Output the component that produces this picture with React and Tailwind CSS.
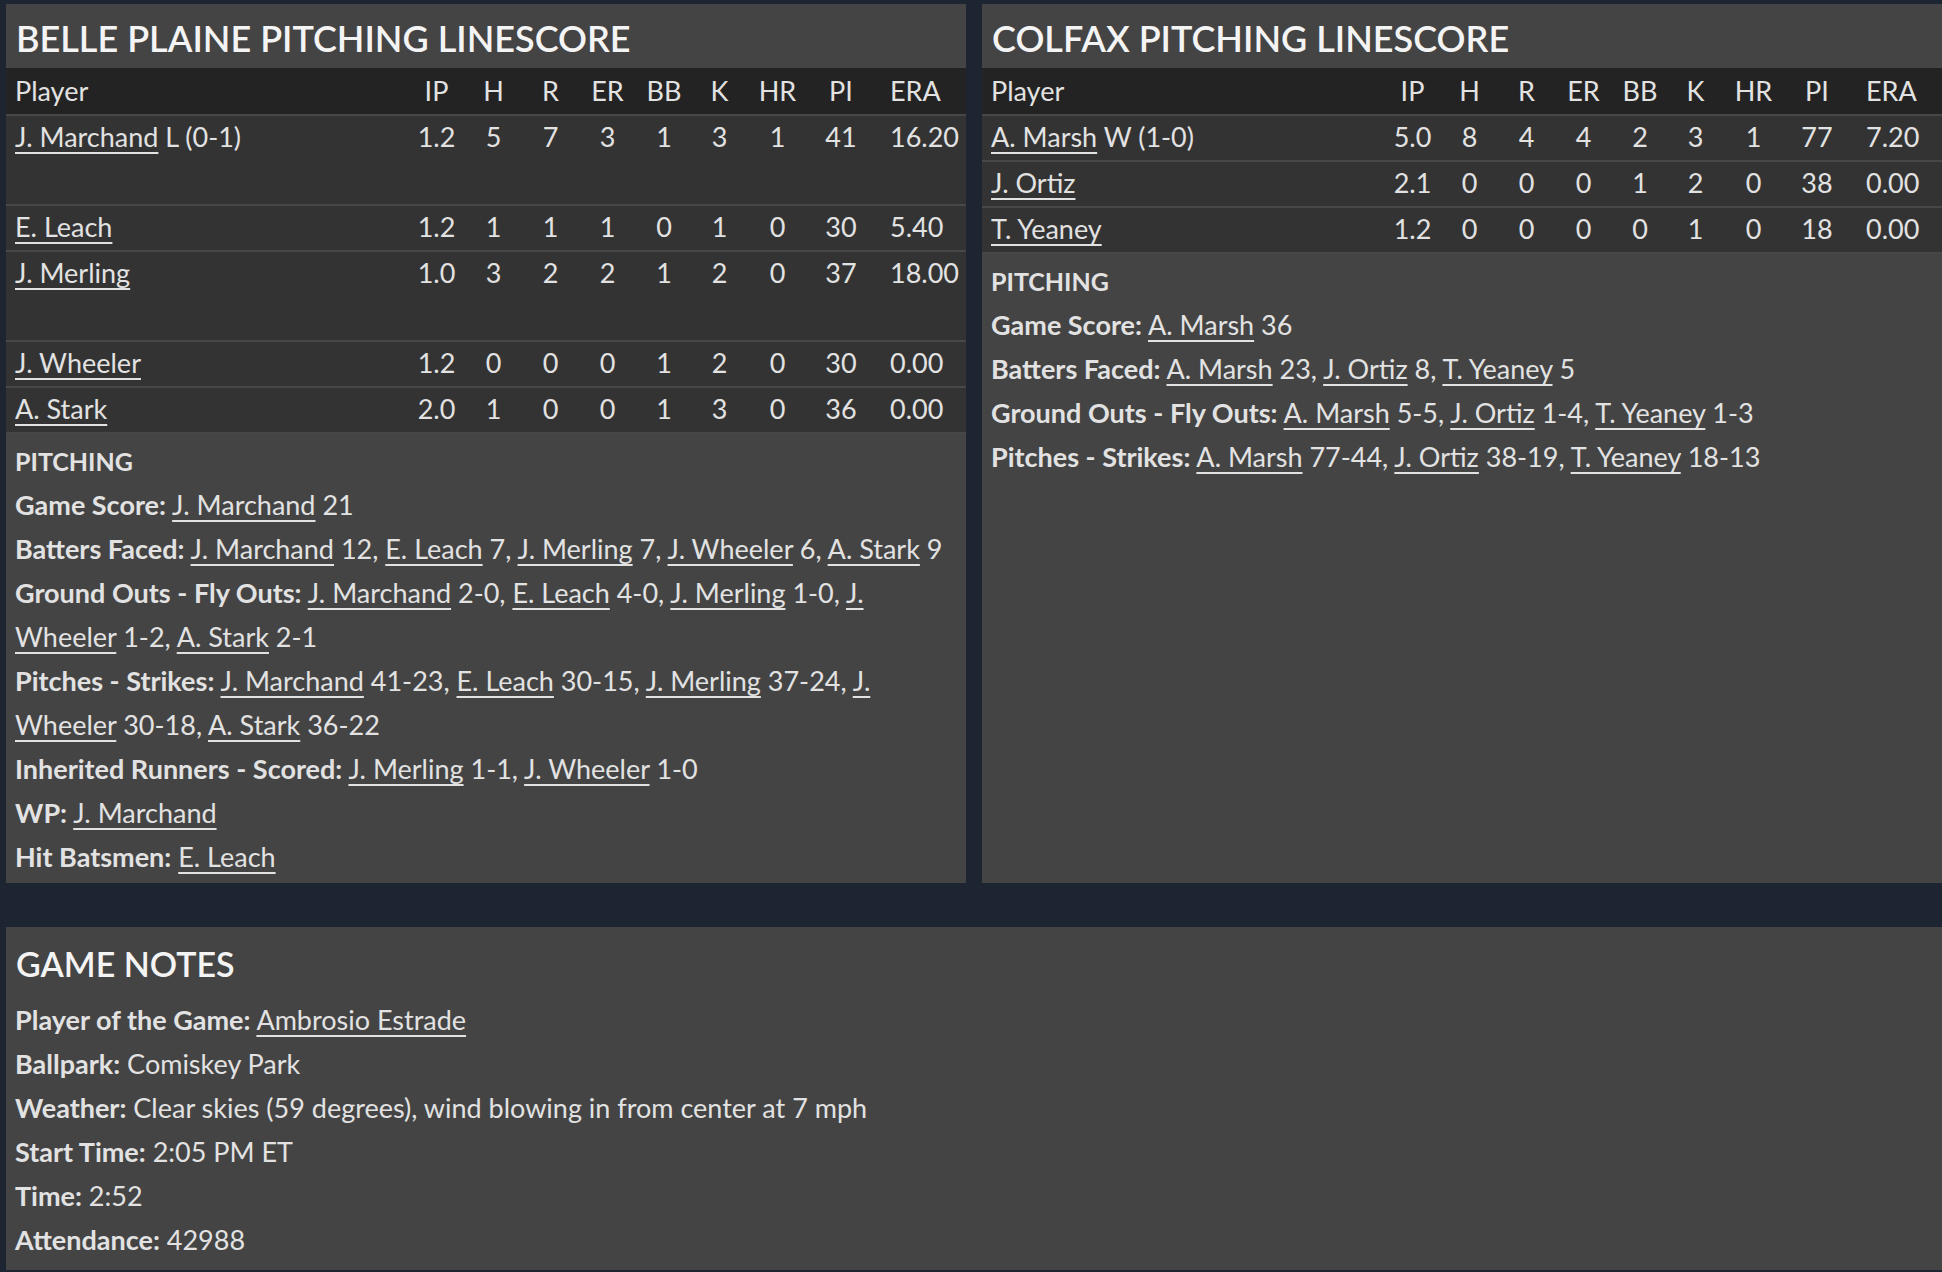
import React from 'react';

const cols = ['IP', 'H', 'R', 'ER', 'BB', 'K', 'HR', 'PI', 'ERA'];

// names that wrap at the panel edge are split in two links, as in the game's page
const teams = [
  {
    title: 'BELLE PLAINE PITCHING LINESCORE',
    rows: [
      { name: 'J. Marchand', note: 'L (0-1)', stats: ['1.2', '5', '7', '3', '1', '3', '1', '41', '16.20'], tall: true },
      { name: 'E. Leach', stats: ['1.2', '1', '1', '1', '0', '1', '0', '30', '5.40'] },
      { name: 'J. Merling', stats: ['1.0', '3', '2', '2', '1', '2', '0', '37', '18.00'], tall: true },
      { name: 'J. Wheeler', stats: ['1.2', '0', '0', '0', '1', '2', '0', '30', '0.00'] },
      { name: 'A. Stark', stats: ['2.0', '1', '0', '0', '1', '3', '0', '36', '0.00'] },
    ],
    notes: [
      ['Game Score', [{ p: 'J. Marchand' }, ' 21']],
      ['Batters Faced', [{ p: 'J. Marchand' }, ' 12, ', { p: 'E. Leach' }, ' 7, ', { p: 'J. Merling' }, ' 7, ', { p: 'J. Wheeler' }, ' 6, ', { p: 'A. Stark' }, ' 9']],
      ['Ground Outs - Fly Outs', [{ p: 'J. Marchand' }, ' 2-0, ', { p: 'E. Leach' }, ' 4-0, ', { p: 'J. Merling' }, ' 1-0, ', { p: 'J.' }, ' ', { p: 'Wheeler' }, ' 1-2, ', { p: 'A. Stark' }, ' 2-1']],
      ['Pitches - Strikes', [{ p: 'J. Marchand' }, ' 41-23, ', { p: 'E. Leach' }, ' 30-15, ', { p: 'J. Merling' }, ' 37-24, ', { p: 'J.' }, ' ', { p: 'Wheeler' }, ' 30-18, ', { p: 'A. Stark' }, ' 36-22']],
      ['Inherited Runners - Scored', [{ p: 'J. Merling' }, ' 1-1, ', { p: 'J. Wheeler' }, ' 1-0']],
      ['WP', [{ p: 'J. Marchand' }]],
      ['Hit Batsmen', [{ p: 'E. Leach' }]],
    ],
  },
  {
    title: 'COLFAX PITCHING LINESCORE',
    rows: [
      { name: 'A. Marsh', note: 'W (1-0)', stats: ['5.0', '8', '4', '4', '2', '3', '1', '77', '7.20'] },
      { name: 'J. Ortiz', stats: ['2.1', '0', '0', '0', '1', '2', '0', '38', '0.00'] },
      { name: 'T. Yeaney', stats: ['1.2', '0', '0', '0', '0', '1', '0', '18', '0.00'] },
    ],
    notes: [
      ['Game Score', [{ p: 'A. Marsh' }, ' 36']],
      ['Batters Faced', [{ p: 'A. Marsh' }, ' 23, ', { p: 'J. Ortiz' }, ' 8, ', { p: 'T. Yeaney' }, ' 5']],
      ['Ground Outs - Fly Outs', [{ p: 'A. Marsh' }, ' 5-5, ', { p: 'J. Ortiz' }, ' 1-4, ', { p: 'T. Yeaney' }, ' 1-3']],
      ['Pitches - Strikes', [{ p: 'A. Marsh' }, ' 77-44, ', { p: 'J. Ortiz' }, ' 38-19, ', { p: 'T. Yeaney' }, ' 18-13']],
    ],
  },
];

const gameNotes = [
  ['Player of the Game', [{ p: 'Ambrosio Estrade' }]],
  ['Ballpark', ['Comiskey Park']],
  ['Weather', ['Clear skies (59 degrees), wind blowing in from center at 7 mph']],
  ['Start Time', ['2:05 PM ET']],
  ['Time', ['2:52']],
  ['Attendance', ['42988']],
];

const grid = 'grid grid-cols-[1fr_57px_57px_57px_57px_56px_55px_61px_66px_92px]';

function PlayerLink({ children }) {
  return <a href="#" className="underline decoration-2 underline-offset-[5px]">{children}</a>;
}

function NoteLine({ label, parts }) {
  return (
    <p>
      <span className="font-bold">{label}:</span>{' '}
      {parts.map((part, i) =>
        typeof part === 'string' ? <span key={i}>{part}</span> : <PlayerLink key={i}>{part.p}</PlayerLink>
      )}
    </p>
  );
}

function Linescore({ team }) {
  return (
    <div className="w-[960px] flex flex-col bg-[#444444]">
      <h2 className="h-16 pl-[10px] pt-[11px] text-[36px] leading-[46px] font-semibold text-[#f4f4f4]">{team.title}</h2>
      <div className={`${grid} h-[46px] items-center bg-[#232323]`}>
        <div className="pl-[9px]">Player</div>
        {cols.map(c => (
          <div key={c} className={c === 'ERA' ? 'pl-4' : 'text-center'}>{c}</div>
        ))}
      </div>
      {team.rows.map(row => (
        <div key={row.name} className={`${grid} ${row.tall ? 'h-[90px]' : 'h-[46px]'} bg-[#333333] border-t-2 border-[#474747] leading-[42px]`}>
          <div className="pl-[9px]">
            <PlayerLink>{row.name}</PlayerLink>
            {row.note && <span> {row.note}</span>}
          </div>
          {row.stats.map((s, i) => (
            <div key={i} className={i === 8 ? 'pl-4' : 'text-center'}>{s}</div>
          ))}
        </div>
      ))}
      <div className="flex-1 border-t-2 border-[#474747] pl-[9px] pr-2 pt-[5px] pb-1 leading-[44px]">
        <p className="font-bold text-[25px]">PITCHING</p>
        {team.notes.map(([label, parts]) => (
          <NoteLine key={label} label={label} parts={parts} />
        ))}
      </div>
    </div>
  );
}

export default function App() {
  return (
    <div className="min-h-screen bg-[#1d2432] pt-1 pl-[6px] font-['Lato','Noto_Sans',sans-serif] text-[27px] text-[#e2e2e2] overflow-hidden">
      <div className="flex gap-4 items-stretch">
        {teams.map(t => (
          <Linescore key={t.title} team={t} />
        ))}
      </div>
      <div className="mt-[44px] w-[1936px] bg-[#444444] pb-2">
        <h2 className="h-16 pl-[10px] pt-[14px] text-[34px] leading-[46px] font-semibold text-[#f4f4f4]">GAME NOTES</h2>
        <div className="pl-[9px] pt-[7px] leading-[44px]">
          {gameNotes.map(([label, parts]) => (
            <NoteLine key={label} label={label} parts={parts} />
          ))}
        </div>
      </div>
    </div>
  );
}
